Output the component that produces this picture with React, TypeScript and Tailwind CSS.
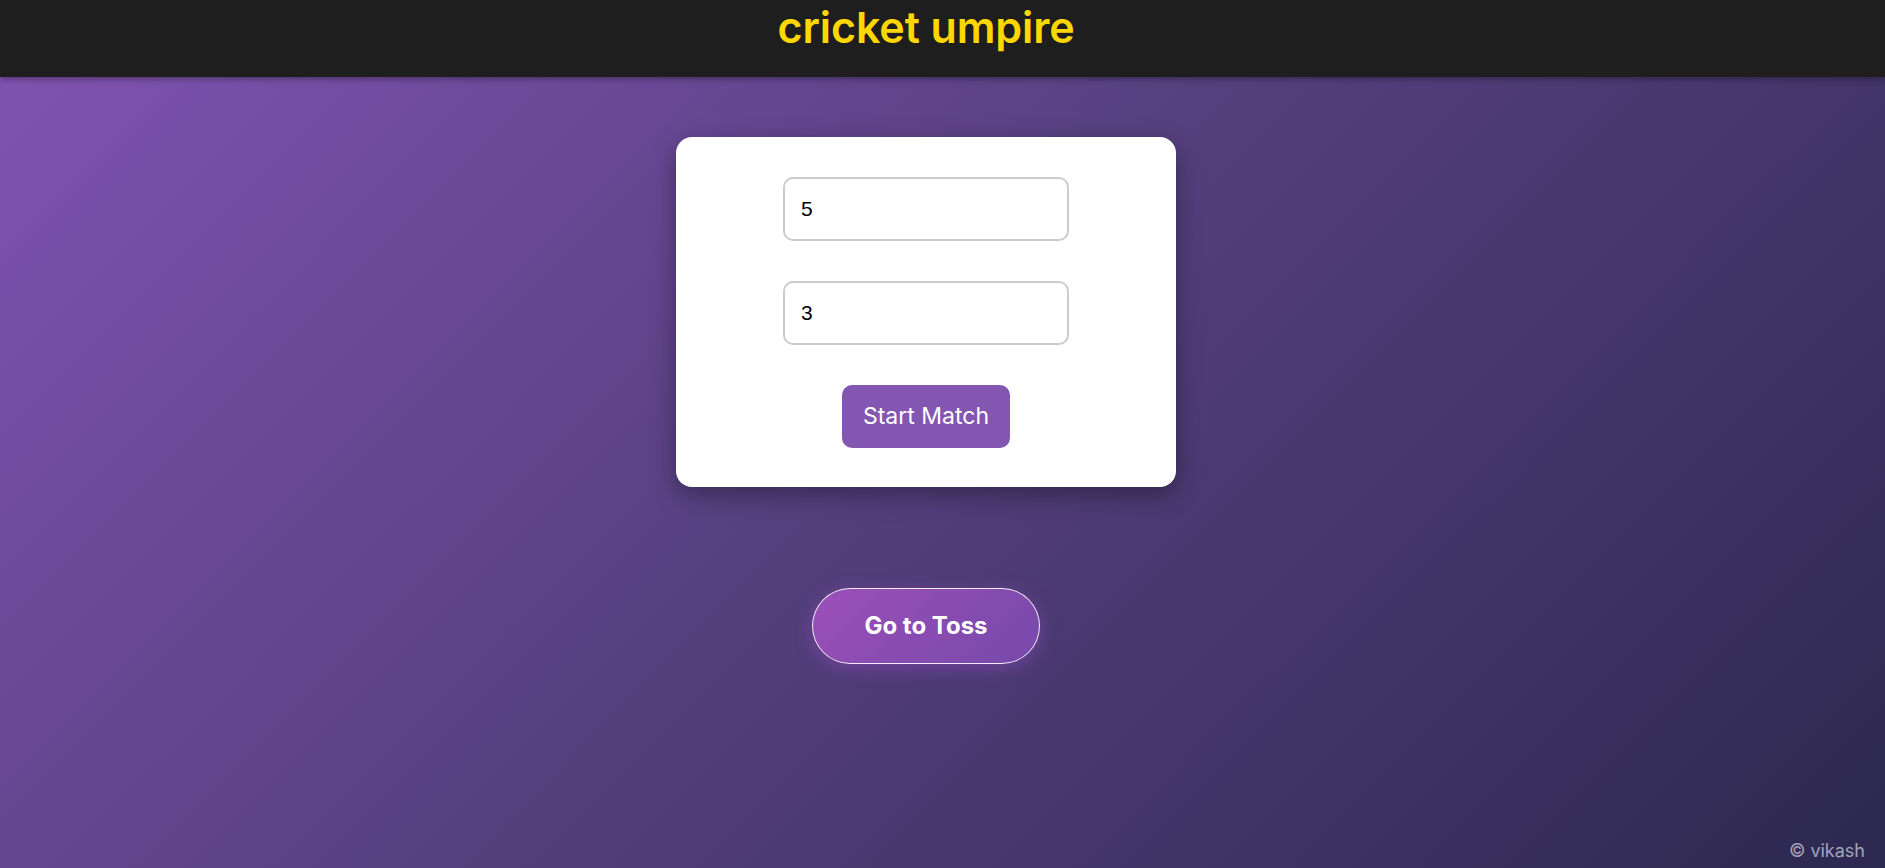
import { useState } from 'react';

function Header() {
  return (
    <header className="h-[77px] bg-[#1e1e1e] shadow-[0_2px_6px_rgba(0,0,0,0.35)] relative z-10 flex justify-center pr-[33px]">
      <h1 className="mt-[1px] font-['Inter',sans-serif] text-[43px] leading-[52px] font-semibold text-[#ffd700] tracking-[-0.1px]">
        cricket umpire
      </h1>
    </header>
  );
}

function ScoreInput({ value, onChange }: { value: string; onChange: (v: string) => void }) {
  return (
    <input
      value={value}
      onChange={(e) => onChange(e.target.value)}
      className="w-[286px] h-[64px] rounded-[10px] border-2 border-[#cccccc] px-4 font-['Liberation_Sans',Arial,sans-serif] text-[21px] text-black outline-none"
    />
  );
}

function SetupCard() {
  const [overs, setOvers] = useState('5');
  const [players, setPlayers] = useState('3');

  return (
    <div className="mt-[60px] w-[500px] rounded-[16px] bg-white px-10 pt-10 pb-[39px] flex flex-col items-center gap-[40px] shadow-[0_8px_24px_rgba(0,0,0,0.35)]">
      <ScoreInput value={overs} onChange={setOvers} />
      <ScoreInput value={players} onChange={setPlayers} />
      <button className="w-[168px] h-[63px] rounded-[10px] bg-[#8356b1] text-white font-['Inter',sans-serif] text-[23px]">
        Start Match
      </button>
    </div>
  );
}

export default function App() {
  return (
    <div className="min-h-screen flex flex-col bg-[#1e1e1e]">
      <Header />
      <main className="flex-1 flex flex-col items-center pr-[33px] bg-[linear-gradient(135deg,#7f52b0_0%,#56407f_45%,#2c2850_100%)]">
        <SetupCard />
        <button className="mt-[101px] w-[228px] h-[76px] rounded-full border border-white/90 bg-[linear-gradient(135deg,#9c4fb9,#7649aa)] text-white font-['Inter',sans-serif] text-[24px] font-bold shadow-[0_4px_18px_rgba(155,80,200,0.45)]">
          Go to Toss
        </button>
        <footer className="mt-auto self-end mr-[-13px] pb-[4px] font-['Inter',sans-serif] text-[18px] text-[#a5a3bd]">
          © vikash
        </footer>
      </main>
    </div>
  );
}
